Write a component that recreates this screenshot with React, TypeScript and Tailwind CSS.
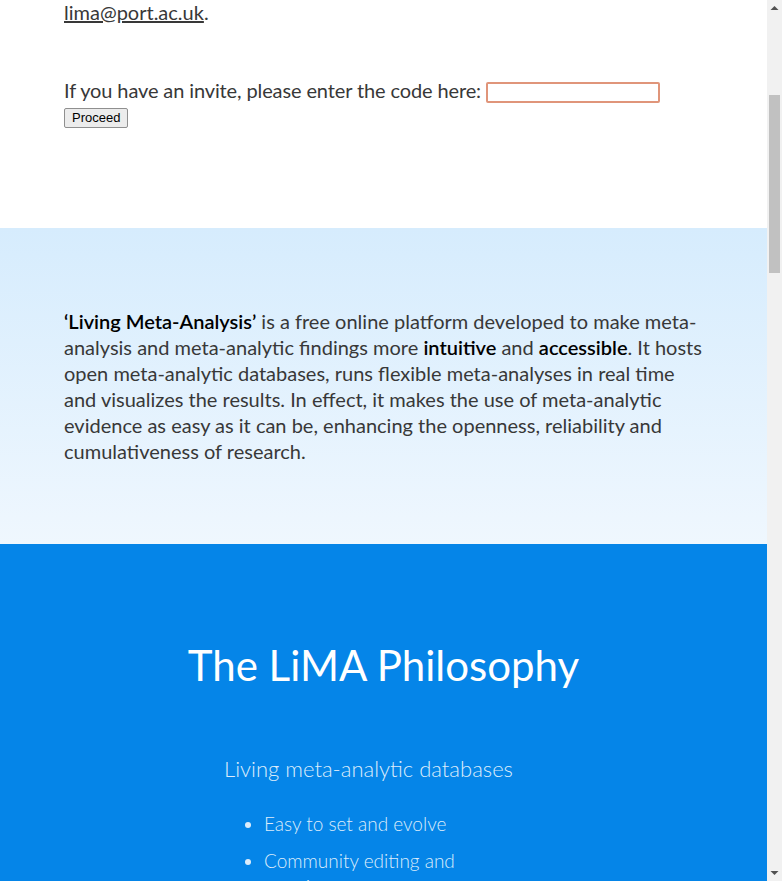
import React, { useEffect, useRef } from 'react';

const font = { fontFamily: 'Lato, "Open Sans", sans-serif' };

function Philosophy({ title, items }: { title: string; items: string[] }) {
	return (
		<div className="ml-[224px] w-[300px]">
			<h3 className="text-[22px] font-light leading-[30px] text-[#dcecfb]">{title}</h3>
			<ul className="mt-[27px] list-disc pl-10 text-[19px] font-light leading-[26px] text-[#dcecfb]">
				{items.map((item) => (
					<li key={item} className="mb-[11px]">
						{item}
					</li>
				))}
			</ul>
		</div>
	);
}

// the reference shows the browser's classic scrollbar, drawn here
function ScrollBar() {
	return (
		<div className="flex h-[881px] w-[15px] shrink-0 flex-col items-center bg-[#f1f1f1]">
			<svg width="15" height="17" viewBox="0 0 15 17">
				<path d="M3.5 10 L7.5 6 L11.5 10 Z" fill="#505050" />
			</svg>
			<div className="mt-[78px] h-[178px] w-[11px] bg-[#c1c1c1]" />
			<div className="flex-1" />
			<svg width="15" height="17" viewBox="0 0 15 17">
				<path d="M3.5 7 L7.5 11 L11.5 7 Z" fill="#505050" />
			</svg>
		</div>
	);
}

export default function App() {
	const scroller = useRef<HTMLDivElement>(null);
	const about = useRef<HTMLElement>(null);
	const code = useRef<HTMLInputElement>(null);

	useEffect(() => {
		const box = scroller.current;
		const band = about.current;
		if (!box || !band) return;
		// the reference is scrolled so the light band starts at y=228
		box.scrollTop = band.offsetTop - 228;
		code.current?.focus({ preventScroll: true });
	}, []);

	return (
		<div className="flex h-[881px] w-full overflow-hidden bg-white" style={font}>
			<div ref={scroller} className="relative h-[881px] flex-1 overflow-y-scroll [scrollbar-width:none]">
				<header className="flex h-[70px] items-center justify-between bg-[#0585e8] px-16 text-white">
					<span className="text-2xl font-bold">LiMA</span>
					<nav className="flex gap-6 text-base">
						<a>Home</a>
						<a>Databases</a>
						<a>About</a>
					</nav>
				</header>

				<section className="px-16 pt-[60px] pb-[100px] text-[20px] leading-[26px] text-[#383838]">
					<h1 className="mb-6 text-[40px] font-normal leading-[48px] text-[#222]">Welcome to LiMA</h1>
					<p className="mb-[26px]">
						The platform is currently in a closed beta. If you would like to take part, please get in touch with us
						by email at
						<br />
						<a className="underline">lima@port.ac.uk</a>.
					</p>
					<p className="mt-[52px] tracking-[-0.12px]">
						If you have an invite, please enter the code here:{' '}
						<input
							ref={code}
							type="text"
							className="h-[21px] w-[174px] rounded-[2px] border-2 border-[#e0957a] align-middle caret-black outline-none"
						/>
					</p>
					<button
						className="mt-[5px] block h-[20px] rounded-[2px] border border-[#8f8f8f] bg-[#ececec] px-[7px] text-[13px] leading-[16px] text-black"
						style={{ fontFamily: '"Liberation Sans", Arial, sans-serif' }}
					>
						Proceed
					</button>
				</section>

				<section
					ref={about}
					className="bg-gradient-to-b from-[#d6ecfd] to-[#eff7fe] px-16 py-20 text-[20px] leading-[26px] text-[#383838]"
				>
					<p>
						<b className="font-semibold text-black">‘Living Meta-Analysis’</b> is a free online platform developed to
						make meta-analysis and meta-analytic findings more <b className="font-semibold text-black">intuitive</b>{' '}
						and <b className="font-semibold text-black">accessible</b>. It hosts open meta-analytic databases, runs
						flexible meta-analyses in real time and visualizes the results. In effect, it makes the use of
						meta-analytic evidence as easy as it can be, enhancing the openness, reliability and cumulativeness of
						research.
					</p>
				</section>

				<section className="bg-[#0585e8] pt-[94px] pb-[120px]">
					<h2 className="text-center text-[42px] font-normal leading-[55px] text-white">The LiMA Philosophy</h2>
					<div className="mt-[61px] flex flex-col gap-16">
						<Philosophy
							title="Living meta-analytic databases"
							items={['Easy to set and evolve', 'Community editing and curation', 'Open and free to reuse']}
						/>
						<Philosophy
							title="Flexible meta-analyses"
							items={['Run in real time', 'Choose the studies to include', 'Moderator and subgroup analyses']}
						/>
						<Philosophy
							title="Visual results"
							items={['Interactive forest plots', 'Grouping and filtering', 'Share and export']}
						/>
						<Philosophy
							title="Reliable research"
							items={['Transparent methods', 'Versioned history', 'Cumulative evidence']}
						/>
					</div>
				</section>

				<section className="px-16 py-20 text-[20px] leading-[26px] text-[#383838]">
					<h2 className="mb-8 text-center text-[40px] font-normal text-[#222]">How it works</h2>
					<p className="mb-6">
						Researchers add their meta-analytic data to a shared database. Anyone can then select studies, run
						analyses and explore the results with interactive visualizations.
					</p>
					<p className="mb-6">
						As new studies are published, the database grows and every analysis built on it is kept up to date.
					</p>
					<p>All data and analyses are open and can be reused under a free licence.</p>
				</section>

				<section className="h-[900px] bg-[#eff7fe] px-16 py-20 text-[20px] leading-[26px] text-[#383838]">
					<h2 className="mb-8 text-center text-[40px] font-normal text-[#222]">The team</h2>
					<p>LiMA is developed at the University of Portsmouth.</p>
				</section>

				<footer className="bg-[#0585e8] px-16 py-10 text-center text-sm text-white">
					© LiMA, University of Portsmouth
				</footer>
			</div>
			<ScrollBar />
		</div>
	);
}
